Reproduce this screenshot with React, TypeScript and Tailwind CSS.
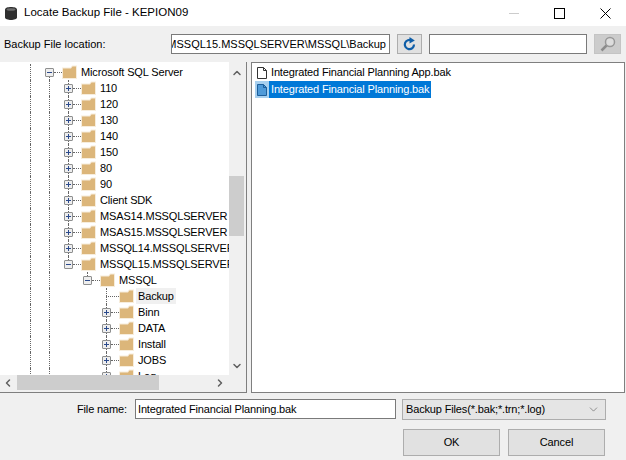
import { ChevronUp, ChevronDown, ChevronLeft, ChevronRight } from 'lucide-react'

type Row = {
  label: string
  guides: number[]
  box?: 'plus' | 'minus'
  stem: 'full' | 'top' | 'bottom'
  active?: boolean
}

const rows: Row[] = [
  { label: 'Microsoft SQL Server', guides: [1], box: 'minus', stem: 'bottom' },
  ...['110', '120', '130', '140', '150', '80', '90', 'Client SDK', 'MSAS14.MSSQLSERVER', 'MSAS15.MSSQLSERVER', 'MSSQL14.MSSQLSERVER'].map(
    label => ({ label, guides: [1, 1], box: 'plus' as const, stem: 'full' as const }),
  ),
  { label: 'MSSQL15.MSSQLSERVER', guides: [1, 1], box: 'minus', stem: 'top' },
  { label: 'MSSQL', guides: [1, 1, 0], box: 'minus', stem: 'top' },
  { label: 'Backup', guides: [1, 1, 0, 0], stem: 'full', active: true },
  { label: 'Binn', guides: [1, 1, 0, 0], box: 'plus', stem: 'full' },
  { label: 'DATA', guides: [1, 1, 0, 0], box: 'plus', stem: 'full' },
  { label: 'Install', guides: [1, 1, 0, 0], box: 'plus', stem: 'full' },
  { label: 'JOBS', guides: [1, 1, 0, 0], box: 'plus', stem: 'full' },
  { label: 'Log', guides: [1, 1, 0, 0], box: 'plus', stem: 'full' },
]

const stemClass = {
  full: 'top-0 bottom-0',
  top: 'top-0 bottom-1/2',
  bottom: 'top-1/2 bottom-0',
}

function Folder() {
  return (
    <svg width="15" height="14" viewBox="0 0 15 14" className="shrink-0">
      <path d="M0 2.5h8.5L10 .5h5V14H0z" fill="#f7eddc" />
      <path d="M1 3.5h8L10.500 1.500H14V13H1z" fill="#dcb67a" />
    </svg>
  )
}

function Expander({ type }: { type: 'plus' | 'minus' }) {
  return (
    <span className="relative z-10 flex h-[9px] w-[9px] shrink-0 items-center justify-center rounded-[1px] border border-[#8e8f8f] bg-[#eeeeee]">
      <svg width="7" height="7" viewBox="0 0 7 7" shapeRendering="crispEdges">
        <path d={type === 'plus' ? 'M1 3h5v1H1zM3 1h1v5H3z' : 'M1 3h5v1H1z'} fill="#2b4a8c" />
      </svg>
    </span>
  )
}

function TreeRow({ row }: { row: Row }) {
  return (
    <div className="flex h-4 items-stretch pl-[30px]">
      {row.guides.map((on, i) => (
        <span key={i} className={`w-[19px] shrink-0 ${on ? 'border-l border-dotted border-[#666]' : ''}`} />
      ))}
      <span className="relative flex w-[13px] shrink-0 items-center">
        <span className={`absolute left-0 w-0 border-l border-dotted border-[#666] ${stemClass[row.stem]}`} />
        {row.box && (
          <span className="-ml-[4px]">
            <Expander type={row.box} />
          </span>
        )}
        <span className="flex-1 border-t border-dotted border-[#666]" />
      </span>
      <span className="flex items-center">
        <Folder />
      </span>
      <span className="flex items-center pl-[2px]">
        <span className={`whitespace-nowrap px-[2px] leading-4 ${row.active ? 'bg-[#f0f0f0]' : ''}`}>{row.label}</span>
      </span>
    </div>
  )
}

function FileIcon({ selected }: { selected?: boolean }) {
  return (
    <span className={`flex h-[17px] w-[14px] shrink-0 items-center justify-center ${selected ? 'bg-[#a8d0ef]' : ''}`}>
      <svg width="12" height="14" viewBox="0 0 12 14">
        <path d="M1.500 1.500h6l3 3v8h-9z" fill={selected ? '#4f9ad8' : '#fff'} stroke={selected ? '#1c5f9c' : '#333'} />
        <path d="M7.500 1.500v3h3" fill="none" stroke={selected ? '#1c5f9c' : '#333'} />
      </svg>
    </span>
  )
}

export default function App() {
  return (
    <div className="flex h-[460px] w-[626px] flex-col overflow-hidden bg-[#f0f0f0] font-['Liberation_Sans',sans-serif] text-[11px] tracking-[-0.15px] text-black">
      <div className="flex h-[26px] items-center bg-white pl-[5px]">
        <svg width="12" height="13" viewBox="0 0 12 13" className="shrink-0">
          <path d="M0 2.500c0-3.300 12-3.300 12 0v8c0 3.300-12 3.300-12 0z" fill="#2f2f2f" />
          <ellipse cx="6" cy="2.500" rx="4.500" ry="1.300" fill="#6e6e6e" />
        </svg>
        <span className="ml-[7px] text-[11.5px] tracking-normal">Locate Backup File - KEPION09</span>
        <div className="ml-auto flex items-center pr-[15px]">
          <span className="h-px w-[10px] bg-[#cccccc]" />
          <span className="ml-[35px] h-[11px] w-[11px] border border-black" />
          <svg width="11" height="11" viewBox="0 0 11 11" className="ml-[35px]">
            <path d="M.5.500l10 10M10.500.500l-10 10" stroke="#000" />
          </svg>
        </div>
      </div>

      <div className="flex h-[36px] items-center">
        <span className="ml-1 w-[167px] tracking-normal">Backup File location:</span>
        <div className="flex h-5 w-[219px] justify-end overflow-hidden border border-[#7a7a7a] bg-white pr-[3px] leading-[18px] tracking-normal">
          <span className="shrink-0 whitespace-nowrap">C:\Program Files\Microsoft SQL Server\MSSQL15.MSSQLSERVER\MSSQL\Backup</span>
        </div>
        <button className="ml-[7px] flex h-5 w-[25px] items-center justify-center border border-[#adadad] bg-[#e1e1e1]">
          <svg width="13" height="14" viewBox="0 0 13 14">
            <path d="M8.800 3.600A4.600 4.600 0 1 0 11 7.500" fill="none" stroke="#0f5ea8" strokeWidth="2.200" />
            <path d="M6.500 0v6.500L11.800 3.500z" fill="#0f5ea8" />
          </svg>
        </button>
        <div className="ml-[7px] h-5 w-[158px] border border-[#7a7a7a] bg-white" />
        <button className="ml-[7px] flex h-5 w-[27px] items-center justify-center border border-[#c4c4c4] bg-[#cccccc]">
          <svg width="16" height="16" viewBox="0 0 16 16">
            <circle cx="10" cy="6" r="4.500" fill="#dddddd" stroke="#989898" strokeWidth="1.500" />
            <path d="M6.500 9.500L1.500 14.500" stroke="#8c8c8c" strokeWidth="2.500" />
          </svg>
        </button>
      </div>

      <div className="flex h-[331px] gap-1">
        <div className="flex w-[247px] flex-col border-r border-b border-[#7f7f7f]">
          <div className="flex h-[313px] bg-white">
            <div className="min-w-0 flex-1 overflow-hidden pt-[2px]">
              {rows.map(row => (
                <TreeRow key={row.label} row={row} />
              ))}
            </div>
            <div className="flex w-[17px] shrink-0 flex-col bg-[#f0f0f0] pr-[2px] text-[#606060]">
              <ChevronUp size={12} strokeWidth={3} className="mt-[5px] self-center" />
              <div className="mt-[97px] h-[60px] w-full bg-[#cdcdcd]" />
              <ChevronDown size={12} strokeWidth={3} className="mt-auto mb-[3px] self-center" />
            </div>
          </div>
          <div className="flex h-[17px] items-start bg-[#f0f0f0] text-[#606060]">
            <ChevronLeft size={12} strokeWidth={3} className="mt-[2px] ml-[2px]" />
            <div className="ml-[3px] h-[15px] w-[142px] bg-[#cdcdcd]" />
            <ChevronRight size={12} strokeWidth={3} className="mt-[2px] mr-[20px] ml-auto" />
          </div>
        </div>
        <div className="mr-px flex-1 border border-[#7f7f7f] bg-white pt-px pl-[3px]">
          <div className="flex h-[17px] items-center">
            <FileIcon />
            <span className="px-[2px] leading-[17px]">Integrated Financial Planning App.bak</span>
          </div>
          <div className="flex h-[17px] items-center">
            <FileIcon selected />
            <span className="bg-[#0078d7] px-[2px] leading-[17px] text-white">Integrated Financial Planning.bak</span>
          </div>
        </div>
      </div>

      <div className="mt-[6px] flex h-[21px] items-start">
        <span className="mt-[2px] ml-[77px] w-[58px]">File name:</span>
        <div className="h-5 w-[261px] border border-[#7a7a7a] bg-white pl-[2px] leading-[18px]">Integrated Financial Planning.bak</div>
        <div className="ml-[6px] flex h-[21px] w-[204px] items-center justify-between border border-[#adadad] bg-[#e5e5e5] pr-[5px] pl-[3px]">
          <span>Backup Files(*.bak;*.trn;*.log)</span>
          <ChevronDown size={13} strokeWidth={1} className="text-[#444]" />
        </div>
      </div>

      <div className="mt-[9px] flex justify-end gap-2 pr-[21px]">
        <button className="h-[27px] w-[97px] border border-[#adadad] bg-[#e1e1e1]">OK</button>
        <button className="h-[27px] w-[97px] border border-[#adadad] bg-[#e1e1e1]">Cancel</button>
      </div>
    </div>
  )
}
